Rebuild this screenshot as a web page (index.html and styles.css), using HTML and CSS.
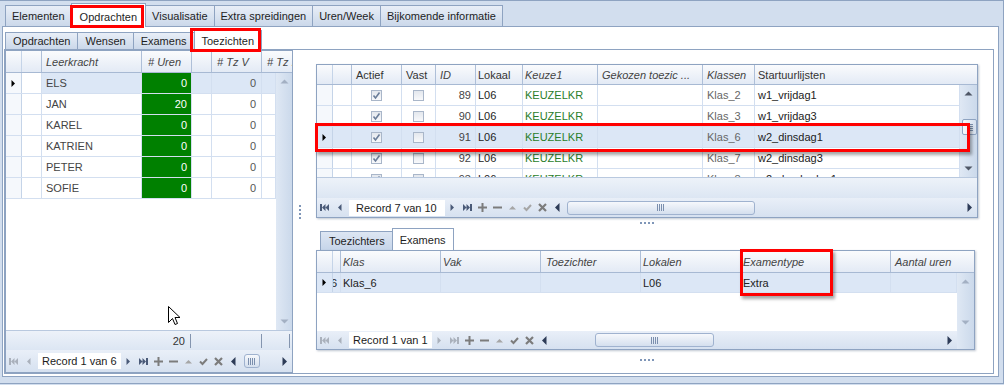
FILE: index.html
```html
<!DOCTYPE html>
<html lang="nl">
<head>
    <meta charset="UTF-8">
    <title>Toezichten</title>
    <link rel="stylesheet" href="styles.css">
</head>
<body>
    <svg class="icon-defs" aria-hidden="true">
        <symbol id="i-first" viewBox="0 0 9 9"><path d="M0 1h2v7H0z M5.5 1v7L2 4.5z M9 1v7L5.5 4.5z"/></symbol>
        <symbol id="i-prev" viewBox="0 0 9 9"><path d="M6.5 1v7L3 4.5z"/></symbol>
        <symbol id="i-next" viewBox="0 0 9 9"><path d="M2.5 1v7L6 4.5z"/></symbol>
        <symbol id="i-last" viewBox="0 0 9 9"><path d="M0 1v7L3.5 4.5z M3.5 1v7L7 4.5z M7 1h2v7H7z"/></symbol>
        <symbol id="i-add" viewBox="0 0 9 9"><path d="M3.5 0h2v3.5H9v2H5.5V9h-2V5.5H0v-2h3.5z"/></symbol>
        <symbol id="i-del" viewBox="0 0 9 9"><path d="M0 3.5h9v2H0z"/></symbol>
        <symbol id="i-up" viewBox="0 0 9 9"><path d="M1 6.5h7L4.5 3z"/></symbol>
        <symbol id="i-ok" viewBox="0 0 9 9"><path d="M1 4.5l2.5 2.5L8 2" fill="none" stroke="currentColor" stroke-width="2"/></symbol>
        <symbol id="i-cancel" viewBox="0 0 9 9"><path d="M1 1l7 7M8 1L1 8" fill="none" stroke="currentColor" stroke-width="2.2"/></symbol>
        <symbol id="i-sl" viewBox="0 0 9 9"><path d="M6.5 0v9L2 4.5z"/></symbol>
        <symbol id="i-sr" viewBox="0 0 9 9"><path d="M2.5 0v9L7 4.5z"/></symbol>
        <symbol id="i-su" viewBox="0 0 9 9"><path d="M0.5 6.5h8L4.5 2.5z"/></symbol>
        <symbol id="i-sd" viewBox="0 0 9 9"><path d="M0.5 2.5h8L4.5 6.5z"/></symbol>
        <symbol id="i-chk" viewBox="0 0 9 9"><path d="M1.5 4.5l2 2.5L7.5 1.5" fill="none" stroke="currentColor" stroke-width="1.6"/></symbol>
    </svg>

    <div class="window">
        <div class="tabs main-tabs">
            <div class="tab">Elementen</div>
            <div class="tab active">Opdrachten</div>
            <div class="tab">Visualisatie</div>
            <div class="tab">Extra spreidingen</div>
            <div class="tab">Uren/Week</div>
            <div class="tab">Bijkomende informatie</div>
        </div>

        <div class="page">
            <div class="tabs sub-tabs">
                <div class="tab">Opdrachten</div>
                <div class="tab">Wensen</div>
                <div class="tab">Examens</div>
                <div class="tab active">Toezichten</div>
            </div>

            <div class="subpage">
                <!-- leerkrachten -->
                <div class="grid staff">
                    <div class="ghead">
                        <div class="cell ind"></div>
                        <div class="cell c-gap"></div>
                        <div class="cell c-name">Leerkracht</div>
                        <div class="cell c-hours">&#35; Uren</div>
                        <div class="cell c-gap"></div>
                        <div class="cell c-tzv">&#35; Tz V</div>
                        <div class="cell fill c-tz">&#35; Tz .</div>
                    </div>
                    <div class="body">
                        <div class="rows">
                            <div class="row sel">
                                <div class="cell ind keep"><svg class="ic mark-arrow"><use href="#i-next"/></svg></div>
                                <div class="cell c-gap keep"></div>
                                <div class="cell c-name">ELS</div>
                                <div class="cell c-hours num green keep">0</div>
                                <div class="cell c-gap"></div>
                                <div class="cell c-tzv num">0</div>
                                <div class="cell fill"></div>
                            </div>
                            <div class="row">
                                <div class="cell ind"></div>
                                <div class="cell c-gap"></div>
                                <div class="cell c-name">JAN</div>
                                <div class="cell c-hours num green">20</div>
                                <div class="cell c-gap"></div>
                                <div class="cell c-tzv num">0</div>
                                <div class="cell fill"></div>
                            </div>
                            <div class="row">
                                <div class="cell ind"></div>
                                <div class="cell c-gap"></div>
                                <div class="cell c-name">KAREL</div>
                                <div class="cell c-hours num green">0</div>
                                <div class="cell c-gap"></div>
                                <div class="cell c-tzv num">0</div>
                                <div class="cell fill"></div>
                            </div>
                            <div class="row">
                                <div class="cell ind"></div>
                                <div class="cell c-gap"></div>
                                <div class="cell c-name">KATRIEN</div>
                                <div class="cell c-hours num green">0</div>
                                <div class="cell c-gap"></div>
                                <div class="cell c-tzv num">0</div>
                                <div class="cell fill"></div>
                            </div>
                            <div class="row">
                                <div class="cell ind"></div>
                                <div class="cell c-gap"></div>
                                <div class="cell c-name">PETER</div>
                                <div class="cell c-hours num green">0</div>
                                <div class="cell c-gap"></div>
                                <div class="cell c-tzv num">0</div>
                                <div class="cell fill"></div>
                            </div>
                            <div class="row">
                                <div class="cell ind"></div>
                                <div class="cell c-gap"></div>
                                <div class="cell c-name">SOFIE</div>
                                <div class="cell c-hours num green">0</div>
                                <div class="cell c-gap"></div>
                                <div class="cell c-tzv num">0</div>
                                <div class="cell fill"></div>
                            </div>
                        </div>
                        <div class="vscroll">
                            <div class="sbtn"><svg class="ic"><use href="#i-su"/></svg></div>
                            <div class="vtrack"></div>
                            <div class="sbtn"><svg class="ic"><use href="#i-sd"/></svg></div>
                        </div>
                    </div>
                    <div class="gfoot">
                        <div class="fspace f-lead"></div>
                        <div class="fcell f-hours">20</div>
                        <div class="fspace f-gap"></div>
                        <div class="fcell f-tzv"></div>
                        <div class="fcell f-tz"></div>
                    </div>
                    <div class="gnav">
                        <div class="nb off"><svg class="ic"><use href="#i-first"/></svg></div>
                        <div class="nb off"><svg class="ic"><use href="#i-prev"/></svg></div>
                        <div class="rec">Record 1 van 6</div>
                        <div class="nb on"><svg class="ic"><use href="#i-next"/></svg></div>
                        <div class="nb on"><svg class="ic"><use href="#i-last"/></svg></div>
                        <div class="nb"><svg class="ic"><use href="#i-add"/></svg></div>
                        <div class="nb"><svg class="ic"><use href="#i-del"/></svg></div>
                        <div class="nb light"><svg class="ic"><use href="#i-up"/></svg></div>
                        <div class="nb"><svg class="ic"><use href="#i-ok"/></svg></div>
                        <div class="nb"><svg class="ic"><use href="#i-cancel"/></svg></div>
                        <div class="hscroll">
                            <div class="nb sarrow"><svg class="ic"><use href="#i-sl"/></svg></div>
                            <div class="htrack"><div class="hthumb" style="margin-left: 3px; width: 16px;"><span class="grip-v"></span></div></div>
                            <div class="nb sarrow"><svg class="ic"><use href="#i-sr"/></svg></div>
                        </div>
                    </div>
                </div>

                <div class="splitter"></div>

                <div class="detail">
                    <!-- opdrachten -->
                    <div class="grid tasks">
                        <div class="ghead">
                            <div class="cell ind"></div>
                            <div class="cell c-gap2"></div>
                            <div class="cell c-act plain">Actief</div>
                            <div class="cell c-vast plain">Vast</div>
                            <div class="cell c-id">ID</div>
                            <div class="cell c-lok plain">Lokaal</div>
                            <div class="cell c-keuze">Keuze1</div>
                            <div class="cell c-gek">Gekozen toezic&nbsp;...</div>
                            <div class="cell c-klas">Klassen</div>
                            <div class="cell fill plain c-start">Startuurlijsten</div>
                        </div>
                        <div class="body">
                            <div class="rows">
                                <div class="row">
                                    <div class="cell ind"></div>
                                    <div class="cell c-gap2"></div>
                                    <div class="cell c-act"><span class="chk"><svg class="ic"><use href="#i-chk"/></svg></span></div>
                                    <div class="cell c-vast"><span class="chk"></span></div>
                                    <div class="cell c-id num">89</div>
                                    <div class="cell c-lok">L06</div>
                                    <div class="cell c-keuze choice">KEUZELKR</div>
                                    <div class="cell c-gek"></div>
                                    <div class="cell c-klas klas">Klas_2</div>
                                    <div class="cell fill c-start">w1_vrijdag1</div>
                                </div>
                                <div class="row">
                                    <div class="cell ind"></div>
                                    <div class="cell c-gap2"></div>
                                    <div class="cell c-act"><span class="chk"><svg class="ic"><use href="#i-chk"/></svg></span></div>
                                    <div class="cell c-vast"><span class="chk"></span></div>
                                    <div class="cell c-id num">90</div>
                                    <div class="cell c-lok">L06</div>
                                    <div class="cell c-keuze choice">KEUZELKR</div>
                                    <div class="cell c-gek"></div>
                                    <div class="cell c-klas klas">Klas_3</div>
                                    <div class="cell fill c-start">w1_vrijdag3</div>
                                </div>
                                <div class="row sel">
                                    <div class="cell ind"><svg class="ic mark-arrow"><use href="#i-next"/></svg></div>
                                    <div class="cell c-gap2"></div>
                                    <div class="cell c-act"><span class="chk"><svg class="ic"><use href="#i-chk"/></svg></span></div>
                                    <div class="cell c-vast"><span class="chk"></span></div>
                                    <div class="cell c-id num">91</div>
                                    <div class="cell c-lok">L06</div>
                                    <div class="cell c-keuze choice">KEUZELKR</div>
                                    <div class="cell c-gek"></div>
                                    <div class="cell c-klas klas">Klas_6</div>
                                    <div class="cell fill c-start">w2_dinsdag1</div>
                                </div>
                                <div class="row">
                                    <div class="cell ind"></div>
                                    <div class="cell c-gap2"></div>
                                    <div class="cell c-act"><span class="chk"><svg class="ic"><use href="#i-chk"/></svg></span></div>
                                    <div class="cell c-vast"><span class="chk"></span></div>
                                    <div class="cell c-id num">92</div>
                                    <div class="cell c-lok">L06</div>
                                    <div class="cell c-keuze choice">KEUZELKR</div>
                                    <div class="cell c-gek"></div>
                                    <div class="cell c-klas klas">Klas_7</div>
                                    <div class="cell fill c-start">w2_dinsdag3</div>
                                </div>
                                <div class="row">
                                    <div class="cell ind"></div>
                                    <div class="cell c-gap2"></div>
                                    <div class="cell c-act"><span class="chk"><svg class="ic"><use href="#i-chk"/></svg></span></div>
                                    <div class="cell c-vast"><span class="chk"></span></div>
                                    <div class="cell c-id num">93</div>
                                    <div class="cell c-lok">L06</div>
                                    <div class="cell c-keuze choice">KEUZELKR</div>
                                    <div class="cell c-gek"></div>
                                    <div class="cell c-klas klas">Klas_8</div>
                                    <div class="cell fill c-start">w2_donderdag1</div>
                                </div>
                            </div>
                            <div class="vscroll live">
                                <div class="sbtn"><svg class="ic"><use href="#i-su"/></svg></div>
                                <div class="vtrack"><div class="vthumb"><span class="grip-h"></span></div></div>
                                <div class="sbtn"><svg class="ic"><use href="#i-sd"/></svg></div>
                            </div>
                        </div>
                        <div class="gfoot"></div>
                        <div class="gnav">
                            <div class="nb on"><svg class="ic"><use href="#i-first"/></svg></div>
                            <div class="nb on"><svg class="ic"><use href="#i-prev"/></svg></div>
                            <div class="rec wide">Record 7 van 10</div>
                            <div class="nb on"><svg class="ic"><use href="#i-next"/></svg></div>
                            <div class="nb on"><svg class="ic"><use href="#i-last"/></svg></div>
                            <div class="nb"><svg class="ic"><use href="#i-add"/></svg></div>
                            <div class="nb"><svg class="ic"><use href="#i-del"/></svg></div>
                            <div class="nb light"><svg class="ic"><use href="#i-up"/></svg></div>
                            <div class="nb light"><svg class="ic"><use href="#i-ok"/></svg></div>
                            <div class="nb"><svg class="ic"><use href="#i-cancel"/></svg></div>
                            <div class="hscroll">
                                <div class="nb sarrow"><svg class="ic"><use href="#i-sl"/></svg></div>
                                <div class="htrack"><div class="hthumb" style="margin-left: 2px; width: 188px;"><span class="grip-v"></span></div></div>
                                <div class="nb sarrow"><svg class="ic"><use href="#i-sr"/></svg></div>
                            </div>
                        </div>
                    </div>

                    <div class="grip"></div>

                    <div class="tabs detail-tabs">
                        <div class="tab">Toezichters</div>
                        <div class="tab active">Examens</div>
                    </div>

                    <!-- examens -->
                    <div class="grid exams">
                        <div class="ghead">
                            <div class="cell ind"></div>
                            <div class="cell c-sm"></div>
                            <div class="cell c-eklas">Klas</div>
                            <div class="cell c-vak">Vak</div>
                            <div class="cell c-toe">Toezichter</div>
                            <div class="cell c-lokalen">Lokalen</div>
                            <div class="cell c-type">Examentype</div>
                            <div class="cell fill c-aantal">Aantal uren</div>
                        </div>
                        <div class="body">
                            <div class="rows">
                                <div class="row sel">
                                    <div class="cell ind"><svg class="ic mark-arrow"><use href="#i-next"/></svg></div>
                                    <div class="cell c-sm"><span>6</span></div>
                                    <div class="cell c-eklas">Klas_6</div>
                                    <div class="cell c-vak"></div>
                                    <div class="cell c-toe"></div>
                                    <div class="cell c-lokalen">L06</div>
                                    <div class="cell c-type">Extra</div>
                                    <div class="cell fill c-aantal"></div>
                                </div>
                            </div>
                            <div class="vscroll">
                                <div class="sbtn"><svg class="ic"><use href="#i-su"/></svg></div>
                                <div class="vtrack"></div>
                                <div class="sbtn"><svg class="ic"><use href="#i-sd"/></svg></div>
                            </div>
                        </div>
                        <div class="gnav">
                            <div class="nb off"><svg class="ic"><use href="#i-first"/></svg></div>
                            <div class="nb off"><svg class="ic"><use href="#i-prev"/></svg></div>
                            <div class="rec">Record 1 van 1</div>
                            <div class="nb off"><svg class="ic"><use href="#i-next"/></svg></div>
                            <div class="nb off"><svg class="ic"><use href="#i-last"/></svg></div>
                            <div class="nb"><svg class="ic"><use href="#i-add"/></svg></div>
                            <div class="nb"><svg class="ic"><use href="#i-del"/></svg></div>
                            <div class="nb light"><svg class="ic"><use href="#i-up"/></svg></div>
                            <div class="nb"><svg class="ic"><use href="#i-ok"/></svg></div>
                            <div class="nb"><svg class="ic"><use href="#i-cancel"/></svg></div>
                            <div class="hscroll">
                                <div class="nb sarrow"><svg class="ic"><use href="#i-sl"/></svg></div>
                                <div class="htrack"><div class="hthumb" style="margin-left: 43px; width: 119px;"><span class="grip-v"></span></div></div>
                                <div class="nb sarrow"><svg class="ic"><use href="#i-sr"/></svg></div>
                            </div>
                            <div class="corner"></div>
                        </div>
                    </div>

                    <div class="grip grip-low"></div>
                </div>
            </div>
        </div>

        <!-- annotations drawn over the screenshot -->
        <div class="mark mark-main"></div>
        <div class="mark mark-sub"></div>
        <div class="mark shadow mark-row"></div>
        <div class="mark shadow mark-type"></div>

        <svg class="cursor" viewBox="0 0 13 20">
            <path d="M0.5 0.5V16.5L4.5 12.5L7 18.5L9.5 17.5L7 11.5H12Z" fill="#fff" stroke="#000" stroke-width="1"/>
        </svg>
    </div>
</body>
</html>
```

FILE: styles.css
```css
body {
    margin: 0;
    font-family: "Liberation Sans", Arial, sans-serif;
    font-size: 11px;
    color: #222;
    background: #d2deee;
    overflow: hidden;
}
.icon-defs {
    position: absolute;
    width: 0;
    height: 0;
}
.ic {
    width: 9px;
    height: 9px;
    fill: currentColor;
}
.window {
    position: relative;
    width: 1004px;
    height: 384px;
    box-sizing: border-box;
    border-top: 1px solid #8ea3c1;
    border-right: 1px solid #8ea3c1;
    border-bottom: 1px solid #8ea3c1;
    background: #d2deee;
}

/* tabs */
.tabs {
    display: flex;
    align-items: flex-end;
}
.tab {
    box-sizing: border-box;
    height: 21px;
    padding: 0 6px;
    display: flex;
    align-items: center;
    white-space: nowrap;
    color: #1e1e1e;
    border: 1px solid #8ea3c1;
    border-left-width: 0;
    border-bottom: 0;
    background: linear-gradient(#e8eef7, #cbd8ea);
}
.tab:first-child {
    border-left-width: 1px;
}
.tab.active {
    position: relative;
    z-index: 1;
    background: #fff;
    border-left-width: 1px;
    margin-left: -1px;
}
.main-tabs {
    height: 25px;
    padding-left: 5px;
}
.main-tabs .tab.active {
    height: 24px;
    padding: 2px 8px 0;
    margin-bottom: -1px;
}
.page {
    margin-left: 2px;
    width: 997px;
    height: 351px;
    box-sizing: border-box;
    border: 1px solid #8ea3c1;
    background: #fff;
}
.sub-tabs {
    height: 22px;
    padding-left: 2px;
}
.sub-tabs .tab {
    height: 17px;
    padding: 0 7px;
}
.sub-tabs .tab.active {
    height: 20px;
    padding-top: 1px;
    margin-bottom: -1px;
}
.subpage {
    display: flex;
    height: 325px;
    box-sizing: border-box;
    margin: 0 4px 0 1px;
    border: 1px solid #8ea3c1;
}
.splitter {
    width: 13px;
    display: flex;
    align-items: center;
    justify-content: center;
}
.splitter::before {
    content: "";
    width: 2px;
    height: 14px;
    background: repeating-linear-gradient(#7f96b8 0 2px, transparent 2px 4px);
}
.detail {
    flex: 1;
    display: flex;
    flex-direction: column;
    padding: 14px 0 0 10px;
}
.grip {
    width: 662px;
    height: 10px;
    box-sizing: border-box;
    padding-top: 4px;
    display: flex;
    justify-content: center;
    align-items: flex-start;
}
.grip::before {
    content: "";
    width: 14px;
    height: 2px;
    background: repeating-linear-gradient(to right, #7f96b8 0 2px, transparent 2px 4px);
}
.grip-low {
    height: 23px;
    padding-top: 9px;
}
.detail-tabs {
    height: 22px;
    padding-left: 4px;
}
.detail-tabs .tab {
    height: 19px;
    padding: 0 7px 0 8px;
    background: linear-gradient(#dde6f3, #c6d5ea);
}
.detail-tabs .tab.active {
    height: 22px;
    padding: 0 7px;
    background: #fff;
}

/* grids */
.grid {
    box-sizing: border-box;
    border: 1px solid #8ea3c1;
    display: flex;
    flex-direction: column;
    background: #fff;
}
.staff {
    width: 288px;
}
.tasks {
    width: 662px;
    height: 154px;
    box-shadow: 1px 1px 2px rgba(70, 90, 120, 0.35);
}
.exams {
    width: 659px;
    height: 100px;
    box-shadow: 1px 1px 2px rgba(70, 90, 120, 0.35);
}
.ghead {
    display: flex;
    flex: none;
    height: 22px;
    box-sizing: border-box;
    border-bottom: 1px solid #a7b9d3;
    background: linear-gradient(#fafbfd, #e3eaf5);
    color: #444;
}
.tasks .ghead {
    height: 20px;
}
.ghead .cell {
    font-style: italic;
    border-right-color: #aebfd8;
}
.ghead .cell.plain {
    font-style: normal;
    color: #333;
}
.ghead .cell:last-child {
    border-right: 0;
}
.ghead .cell.ind {
    background: none;
}
.body {
    flex: 1;
    display: flex;
    min-height: 0;
    overflow: hidden;
}
.rows {
    flex: 1;
    min-width: 0;
}
.row {
    display: flex;
    height: 21px;
    box-sizing: border-box;
    border-bottom: 1px solid #d3dff0;
}
.exams .row {
    height: 20px;
}
.cell {
    flex: none;
    box-sizing: border-box;
    height: 100%;
    display: flex;
    align-items: center;
    padding: 0 4px;
    overflow: hidden;
    white-space: nowrap;
    border-right: 1px solid #d3dff0;
}
.cell.fill {
    flex: 1;
    min-width: 0;
}
.cell.num {
    justify-content: flex-end;
}
.cell.ind {
    width: 16px;
    padding: 0;
    justify-content: center;
    background: #f5f8fc;
    border-right-color: #c5d4e8;
}
.mark-arrow {
    color: #000;
}
.row.sel .cell:not(.keep) {
    background: #dce7f6;
}

/* staff columns */
.c-gap { width: 20px; }
.c-name { width: 100px; color: #444; }
.c-hours { width: 50px; padding: 0 4px 0 6px; }
.c-tzv { width: 50px; padding: 0 5px; color: #555; }
.ghead .c-tz { padding: 0 0 0 5px; }
.cell.green {
    background: #008000;
    color: #fff;
}
.staff .ghead .c-tzv { color: #444; }

/* task columns */
.c-gap2 { width: 19px; }
.c-act { width: 50px; justify-content: center; }
.c-vast { width: 34px; justify-content: center; }
.ghead .c-act, .ghead .c-vast { justify-content: flex-start; }
.c-id { width: 40px; padding: 0 4px; color: #444; }
.c-lok { width: 47px; padding: 0 2px; }
.c-keuze { width: 75px; padding: 0 2px; }
.c-gek { width: 105px; }
.c-klas { width: 52px; padding: 0 4px; }
.c-start { padding: 0 3px; }
.ghead .c-id, .ghead .c-klas { padding: 0 4px; }
.choice { color: #2a7d2a; }
.klas { color: #666; }
.chk {
    width: 11px;
    height: 11px;
    box-sizing: border-box;
    border: 1px solid #a9b6c9;
    background: linear-gradient(#e3e7ed, #f8f9fb);
    display: flex;
    align-items: center;
    justify-content: center;
    color: #6a7d99;
}

/* exam columns */
.c-sm { width: 8px; padding: 0; }
.c-sm span { margin-left: -2px; }
.c-eklas { width: 100px; padding: 0 2px; }
.c-vak { width: 100px; padding: 0 2px; }
.c-toe { width: 100px; padding: 0 5px; }
.c-lokalen { width: 101px; padding: 0 2px; }
.c-type { width: 149px; padding: 0 1px; }
.c-aantal { padding: 0 4px; }

/* scrollbars */
.vscroll {
    flex: none;
    width: 16px;
    display: flex;
    flex-direction: column;
    background: linear-gradient(to right, #dfe8f4, #cbd9eb);
    color: #a3b0c3;
}
.tasks .vscroll, .exams .vscroll {
    width: 17px;
}
.vscroll.live {
    color: #4f5766;
}
.sbtn {
    flex: none;
    height: 17px;
    display: flex;
    align-items: center;
    justify-content: center;
}
.vtrack {
    flex: 1;
}
.vthumb {
    margin: 17px 0 0 2px;
    height: 16px;
    box-sizing: border-box;
    border: 1px solid #8ea3c1;
    border-radius: 2px;
    background: linear-gradient(to right, #f6f8fc, #d5e0ef);
    display: flex;
    align-items: center;
    justify-content: center;
}
.grip-h {
    width: 6px;
    height: 7px;
    background: repeating-linear-gradient(#7b8fae 0 1px, transparent 1px 2px);
}
.grip-v {
    width: 7px;
    height: 7px;
    background: repeating-linear-gradient(to right, #7b8fae 0 1px, transparent 1px 2px);
}

/* footer + navigator */
.gfoot {
    display: flex;
    align-items: center;
    flex: none;
    height: 20px;
    box-sizing: border-box;
    border-top: 1px solid #b9c9df;
    background: linear-gradient(#edf2f9, #dce6f3);
}
.tasks .gfoot {
    height: 21px;
}
.fspace { flex: none; }
.f-lead { width: 136px; }
.f-gap { width: 20px; }
.fcell {
    flex: none;
    box-sizing: border-box;
    height: 14px;
    display: flex;
    align-items: center;
    justify-content: flex-end;
    padding-right: 5px;
    border-right: 1px solid #8495af;
    color: #333;
}
.f-hours { width: 49px; }
.f-tzv { width: 50px; margin-left: 1px; }
.f-tz { width: 28px; }
.gnav {
    display: flex;
    align-items: center;
    flex: none;
    height: 22px;
    background: linear-gradient(#e9eff8, #d6e1f0);
}
.tasks .gnav { height: 19px; }
.exams .gnav { height: 18px; }
.nb {
    flex: none;
    width: 15px;
    height: 100%;
    display: flex;
    align-items: center;
    justify-content: center;
    color: #7c7c7c;
}
.nb.off { color: #aab1bc; }
.nb.on { color: #4a5a78; }
.nb.light { color: #a6a6a6; }
.nb.sarrow { color: #2d3b57; }
.rec {
    flex: none;
    height: 16px;
    margin-left: 2px;
    padding: 0 4px;
    display: flex;
    align-items: center;
    background: #fff;
    color: #1b1b1b;
}
.rec.wide {
    padding: 0 8px 0 7px;
}
.hscroll {
    flex: 1;
    min-width: 0;
    height: 100%;
    display: flex;
    align-items: center;
}
.htrack {
    flex: 1;
    display: flex;
    align-items: center;
}
.hthumb {
    flex: none;
    height: 14px;
    box-sizing: border-box;
    border: 1px solid #9fb2cf;
    border-radius: 3px;
    background: linear-gradient(#f6f8fc, #d4dfee);
    display: flex;
    align-items: center;
    justify-content: center;
}
.corner {
    flex: none;
    width: 17px;
    align-self: stretch;
    background: linear-gradient(to right, #dfe8f4, #cbd9eb);
}

/* red annotation boxes */
.mark {
    position: absolute;
    z-index: 5;
    box-sizing: border-box;
    border: 3px solid #f00;
    pointer-events: none;
}
.mark.shadow {
    box-shadow: 2px 3px 3px rgba(0, 0, 0, 0.35);
}
.mark-main { left: 70px; top: 4px; width: 74px; height: 23px; }
.mark-sub { left: 190px; top: 27px; width: 71px; height: 24px; }
.mark-row { left: 315px; top: 122px; width: 655px; height: 29px; }
.mark-type { left: 740px; top: 248px; width: 93px; height: 47px; }
.cursor {
    position: absolute;
    z-index: 6;
    left: 168px;
    top: 305px;
    width: 13px;
    height: 20px;
}
```
